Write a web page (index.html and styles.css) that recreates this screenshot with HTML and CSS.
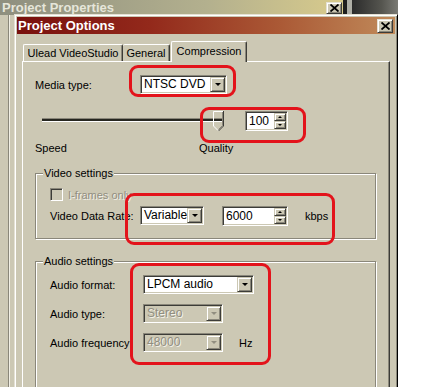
FILE: index.html
```html
<!DOCTYPE html>
<html lang="en">
<head>
    <meta charset="UTF-8">
    <meta name="viewport" content="width=device-width, initial-scale=1.0">
    <title>Project Options</title>
    <link rel="stylesheet" href="styles.css">
</head>
<body>
    <div class="desktop">
        <div class="back-window">
            <div class="back-title">
                <span>Project Properties</span>
                <span class="close-btn">
                    <svg width="9" height="8" viewBox="0 0 9 8"><path d="M0.5 0.5 L8.5 7.5 M8.5 0.5 L0.5 7.5" stroke="#000" stroke-width="1.8" fill="none"/></svg>
                </span>
            </div>
            <div class="back-body"></div>
        </div>
        <div class="back-image"></div>

        <div class="dialog">
            <div class="titlebar">
                <span class="title">Project Options</span>
                <span class="close-btn">
                    <svg width="9" height="8" viewBox="0 0 9 8"><path d="M0.5 0.5 L8.5 7.5 M8.5 0.5 L0.5 7.5" stroke="#000" stroke-width="1.8" fill="none"/></svg>
                </span>
            </div>

            <div class="tabs">
                <div class="tab tab-ulead">Ulead VideoStudio</div>
                <div class="tab tab-general">General</div>
                <div class="tab tab-compression active">Compression</div>
            </div>

            <div class="panel">
                <div class="row media-row">
                    <span class="label label-media">Media type:</span>
                    <div class="combo combo-media">
                        <span class="combo-text">NTSC DVD</span>
                        <span class="combo-btn"><i class="arrow"></i></span>
                    </div>
                </div>

                <div class="row slider-row">
                    <div class="slider">
                        <div class="track"></div>
                        <svg class="thumb" width="11" height="20" viewBox="0 0 11 20">
                            <path d="M0.5 15 L0.5 0.5 L10 0.5" stroke="#fff" fill="none"/>
                            <path d="M10.5 0 L10.5 15 L5.5 20" stroke="#3c3c38" fill="none"/>
                            <path d="M9.5 1 L9.5 14.5 L5.5 18.5" stroke="#8a877a" fill="none"/>
                            <path d="M0.5 15 L5 19.5" stroke="#fff" fill="none"/>
                        </svg>
                    </div>
                    <div class="spin spin-quality">
                        <span class="spin-text">100</span>
                        <span class="spin-btns">
                            <span class="spin-btn"><i class="arrow-up"></i></span>
                            <span class="spin-btn"><i class="arrow-down"></i></span>
                        </span>
                    </div>
                </div>

                <div class="slider-labels">
                    <span class="speed">Speed</span>
                    <span>Quality</span>
                </div>

                <div class="group group-video">
                    <div class="group-title">Video settings</div>
                    <div class="row check-row">
                        <span class="checkbox"></span>
                        <span class="disabled">I-frames only</span>
                    </div>
                    <div class="row rate-row">
                        <span class="label label-rate">Video Data Rate:</span>
                        <div class="combo combo-rate">
                            <span class="combo-text">Variable</span>
                            <span class="combo-btn"><i class="arrow"></i></span>
                        </div>
                        <div class="spin spin-rate">
                            <span class="spin-text">6000</span>
                            <span class="spin-btns">
                                <span class="spin-btn"><i class="arrow-up"></i></span>
                                <span class="spin-btn"><i class="arrow-down"></i></span>
                            </span>
                        </div>
                        <span class="unit unit-kbps">kbps</span>
                    </div>
                </div>

                <div class="group group-audio">
                    <div class="group-title">Audio settings</div>
                    <div class="row audio-row first">
                        <span class="label label-audio">Audio format:</span>
                        <div class="combo combo-format">
                            <span class="combo-text">LPCM audio</span>
                            <span class="combo-btn"><i class="arrow"></i></span>
                        </div>
                    </div>
                    <div class="row audio-row">
                        <span class="label label-audio">Audio type:</span>
                        <div class="combo combo-small is-disabled">
                            <span class="combo-text">Stereo</span>
                            <span class="combo-btn"><i class="arrow"></i></span>
                        </div>
                    </div>
                    <div class="row audio-row">
                        <span class="label label-audio">Audio frequency:</span>
                        <div class="combo combo-small is-disabled">
                            <span class="combo-text">48000</span>
                            <span class="combo-btn"><i class="arrow"></i></span>
                        </div>
                        <span class="unit unit-hz">Hz</span>
                    </div>
                </div>
            </div>
        </div>

        <div class="mark mark-media"></div>
        <div class="mark mark-quality"></div>
        <div class="mark mark-rate"></div>
        <div class="mark mark-audio"></div>
    </div>
</body>
</html>
```

FILE: styles.css
```css
:root {
    --face: #ccc8b4;
    --light: #e4e1d4;
    --shadow: #8a877a;
    --dark: #3c3c38;
    --disabled-text: #918e80;
    --mark-color: #e3131b;
}

body {
    margin: 0;
    background-color: #ffffff;
    font-family: 'Liberation Sans', Arial, sans-serif;
    font-size: 11px;
    color: #000;
}

.desktop {
    position: relative;
    width: 428px;
    height: 387px;
    overflow: hidden;
}

/* Window behind the dialog */
.back-window {
    position: absolute;
    left: 0;
    top: 0;
    width: 343px;
    height: 387px;
    background-color: var(--face);
}

.back-title {
    display: flex;
    align-items: center;
    justify-content: space-between;
    height: 15px;
    padding: 0 1px 0 2px;
    background: linear-gradient(to right, #8e8f7f, #b3b08e 60%, #d8cb8c);
    color: #e6e6da;
    font-weight: bold;
    font-size: 13px;
}

.back-title .close-btn {
    height: 12px;
}

.back-body {
    margin-left: 9px;
    height: 372px;
    border-left: 1px solid #f2f0e6;
    box-shadow: -1px 0 0 var(--shadow);
}

.back-image {
    position: absolute;
    left: 343px;
    top: 0;
    width: 55px;
    height: 14px;
    background: linear-gradient(to right, #1e1e1e 0 4px, #aeaea6 4px 9px, #2b2b2b 9px, #55554f 70%, #7a7a74);
}

/* Dialog */
.dialog {
    position: absolute;
    left: 14px;
    top: 14px;
    width: 384px;
    height: 420px;
    box-sizing: border-box;
    padding: 2px;
    display: flex;
    flex-direction: column;
    background-color: var(--face);
    border: 1px solid;
    border-color: var(--light) #000 #000 var(--light);
    box-shadow: inset 1px 1px 0 #fff, inset -1px -1px 0 var(--shadow);
}

.titlebar {
    display: flex;
    align-items: center;
    justify-content: space-between;
    height: 17px;
    flex-shrink: 0;
    padding: 0 2px 0 1px;
    background: linear-gradient(to right, #78100d, #93291b 35%, #ab5a36 70%, #c08a5a);
    color: #fff;
    font-weight: bold;
    font-size: 13px;
}

.close-btn {
    display: flex;
    align-items: center;
    justify-content: center;
    width: 16px;
    height: 14px;
    box-sizing: border-box;
    background-color: var(--face);
    border: 1px solid;
    border-color: var(--light) var(--dark) var(--dark) var(--light);
    box-shadow: inset 1px 1px 0 #fff, inset -1px -1px 0 var(--shadow);
}

/* Tabs */
.tabs {
    position: relative;
    z-index: 1;
    display: flex;
    flex-shrink: 0;
    align-items: flex-end;
    height: 21px;
    margin-top: 7px;
    margin-bottom: -1px;
    padding-left: 6px;
}

.tab {
    height: 17px;
    margin-bottom: 1px;
    box-sizing: border-box;
    padding-top: 2px;
    text-align: center;
    border-top: 1px solid #fff;
    border-left: 1px solid #fff;
    border-right: 1px solid var(--dark);
    border-radius: 2px 2px 0 0;
    box-shadow: inset -1px 0 0 var(--shadow);
    background-color: var(--face);
}

.tab-ulead { width: 100px; }
.tab-general { width: 47px; border-left: none; }

.tab.active {
    width: 76px;
    height: 21px;
    margin-bottom: 0;
    margin-left: 1px;
    padding-top: 3px;
}

.panel {
    flex: 1 0 auto;
    margin: 0 5px;
    padding: 13px 0 0 12px;
    border-top: 1px solid #fff;
    border-left: 1px solid #fff;
    border-right: 1px solid var(--dark);
    box-shadow: inset -1px 0 0 var(--shadow);
}

.row {
    display: flex;
    align-items: center;
}

.media-row { height: 19px; }
.label-media { width: 105px; }

/* Combo boxes */
.combo {
    display: flex;
    height: 19px;
    box-sizing: border-box;
    padding: 1px;
    background-color: #fff;
    border: 1px solid;
    border-color: var(--shadow) #fff #fff var(--shadow);
    box-shadow: inset 1px 1px 0 var(--dark), inset -1px -1px 0 var(--face);
}

.combo-text {
    flex: 1;
    padding-left: 2px;
    line-height: 15px;
    font-size: 12px;
}

.combo-btn {
    display: flex;
    align-items: center;
    justify-content: center;
    width: 15px;
    height: 15px;
    box-sizing: border-box;
    background-color: var(--face);
    border: 1px solid;
    border-color: var(--face) var(--dark) var(--dark) var(--face);
    box-shadow: inset 1px 1px 0 #fff, inset -1px -1px 0 var(--shadow);
}

.arrow {
    width: 0;
    height: 0;
    border-left: 3px solid transparent;
    border-right: 3px solid transparent;
    border-top: 3px solid #000;
}

.combo.is-disabled {
    background-color: var(--face);
}

.combo.is-disabled .combo-text {
    color: var(--disabled-text);
    text-shadow: 1px 1px 0 #f4f2ea;
}

.combo.is-disabled .arrow {
    border-top-color: var(--disabled-text);
}

.combo-media { width: 87px; }
.combo-rate { width: 64px; }
.combo-format { width: 111px; }
.combo-small { width: 80px; }

/* Slider + spin */
.slider-row {
    height: 20px;
    margin-top: 17px;
}

.slider {
    position: relative;
    width: 210px;
    height: 20px;
}

.track {
    width: 181px;
    height: 2px;
    margin: 7px 0 0 7px;
    background-color: #26261f;
    border-top: 1px solid var(--shadow);
    box-shadow: 0 1px 0 #fff;
}

.thumb {
    position: absolute;
    left: 178px;
    top: 0;
}

.spin {
    display: flex;
    height: 20px;
    box-sizing: border-box;
    padding: 1px;
    background-color: #fff;
    border: 1px solid;
    border-color: var(--shadow) #fff #fff var(--shadow);
    box-shadow: inset 1px 1px 0 var(--dark), inset -1px -1px 0 var(--face);
}

.spin-text {
    flex: 1;
    padding-left: 2px;
    line-height: 16px;
    font-size: 12px;
}

.spin-btns {
    display: flex;
    flex-direction: column;
    width: 12px;
}

.spin-btn {
    flex: 1;
    display: flex;
    align-items: center;
    justify-content: center;
    box-sizing: border-box;
    background-color: var(--face);
    border: 1px solid;
    border-color: var(--face) var(--dark) var(--dark) var(--face);
    box-shadow: inset 1px 1px 0 #fff, inset -1px -1px 0 var(--shadow);
}

.arrow-up,
.arrow-down {
    width: 0;
    height: 0;
    border-left: 2px solid transparent;
    border-right: 2px solid transparent;
}

.arrow-up { border-bottom: 2px solid #000; }
.arrow-down { border-top: 2px solid #000; }

.spin-quality { width: 43px; }
.spin-rate { width: 66px; margin-left: 18px; }

.slider-labels {
    display: flex;
    margin-top: 11px;
    line-height: 13px;
}

.speed { width: 164px; }

/* Group boxes */
.group {
    width: 341px;
    box-sizing: border-box;
    padding-left: 14px;
    border: 1px solid var(--shadow);
    box-shadow: inset 1px 1px 0 #fff, 1px 1px 0 #fff;
}

.group-title {
    width: max-content;
    margin: -7px 0 0 -7px;
    padding: 0 1px;
    line-height: 13px;
    background-color: var(--face);
}

.group-video {
    height: 66px;
    margin-top: 18px;
}

.check-row {
    height: 13px;
    margin-top: 8px;
}

.checkbox {
    width: 13px;
    height: 13px;
    box-sizing: border-box;
    margin-right: 5px;
    border: 1px solid;
    border-color: var(--shadow) #fff #fff var(--shadow);
    box-shadow: inset 1px 1px 0 var(--dark), inset -1px -1px 0 var(--face);
}

.disabled {
    color: var(--disabled-text);
    text-shadow: 1px 1px 0 #f4f2ea;
}

.rate-row {
    height: 19px;
    margin-top: 5px;
}

.label-rate { width: 90px; }

.unit-kbps { margin-left: 17px; }
.unit-hz { margin-left: 16px; }

.group-audio {
    height: 170px;
    margin-top: 22px;
}

.audio-row {
    height: 19px;
    margin-top: 10px;
}

.audio-row.first { margin-top: 7px; }

.label-audio { width: 93px; }

/* Red annotation marks */
.mark {
    position: absolute;
    box-sizing: border-box;
    border: 3px solid var(--mark-color);
    border-radius: 9px;
}

.mark-media { left: 129px; top: 65px; width: 107px; height: 32px; }
.mark-quality { left: 200px; top: 107px; width: 106px; height: 36px; }
.mark-rate { left: 125px; top: 193px; width: 210px; height: 52px; }
.mark-audio { left: 130px; top: 263px; width: 141px; height: 102px; }
```
